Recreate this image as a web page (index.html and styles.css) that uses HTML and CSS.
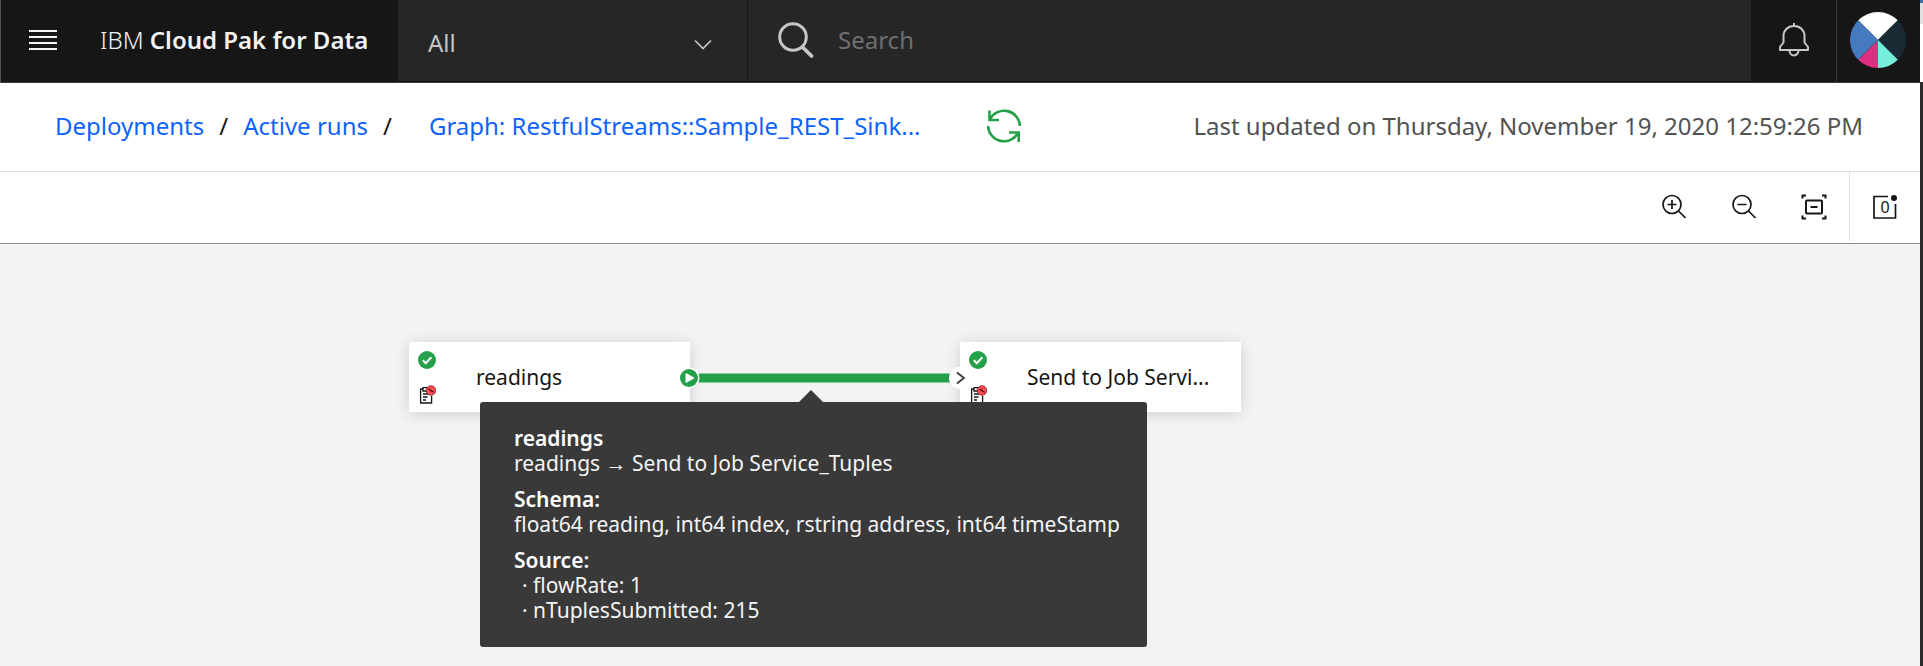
FILE: index.html
```html
<!DOCTYPE html>
<html lang="en">
<head>
<meta charset="utf-8">
<title>IBM Cloud Pak for Data</title>
<link rel="stylesheet" href="styles.css">
</head>
<body>
<div class="app">
  <header class="header">
    <div class="brand">
      <button class="menu" type="button" aria-label="Menu">
        <svg width="30" height="22" viewBox="0 0 30 22" fill="none" stroke="#f4f4f4" stroke-width="2"><path d="M1 2h28M1 8h28M1 14h28M1 20h28"/></svg>
      </button>
      <a class="brand-name" href="#">IBM <b>Cloud Pak for Data</b></a>
    </div>
    <div class="scope">
      <select class="scope-select" aria-label="Search scope"><option>All</option></select>
      <svg class="scope-chevron" width="18" height="12" viewBox="0 0 18 12" fill="none" stroke="#c6c6c6" stroke-width="1.700"><path d="M1 1.500l8 8 8-8"/></svg>
    </div>
    <label class="search">
      <svg width="36" height="37" viewBox="0 0 36 37" fill="none" stroke="#c6c6c6" stroke-width="3"><circle cx="15" cy="15" r="13.300"/><path d="M24.500 25l9 9" stroke-width="3.800" stroke-linecap="round"/></svg>
      <input class="search-input" type="search" placeholder="Search" aria-label="Search">
    </label>
    <button class="header-action bell" type="button" aria-label="Notifications">
      <svg width="32" height="36" viewBox="0 0 32 36" fill="none" stroke="#c6c6c6" stroke-width="2"><path d="M16 1v3M16 4C9.500 4 5.500 8.500 5.500 14v6.500L2 25v3h28v-3l-3.500-4.500V14C26.500 8.500 22.500 4 16 4zM11.500 28.500a4.500 5 0 0 0 9 0" stroke-linejoin="round"/></svg>
    </button>
    <button class="header-action user" type="button" aria-label="User profile">
      <svg width="56" height="56" viewBox="-28 -28 56 56"><path fill="#fff" d="M0 0L-19.800-19.800A28 28 0 0 1 19.800-19.800z"/><path fill="#1a2b35" d="M0 0L19.800-19.800A28 28 0 0 1 19.800 19.800z"/><path fill="#76eedb" d="M0 0L19.800 19.800A28 28 0 0 1 0 28z"/><path fill="#dc2f80" d="M0 0V28A28 28 0 0 1-19.800 19.800z"/><path fill="#4679bd" d="M0 0L-19.800 19.800A28 28 0 0 1-19.800-19.800z"/></svg>
    </button>
  </header>
  <div class="subheader">
    <nav class="crumbs" aria-label="Breadcrumb">
      <a href="#">Deployments</a><span class="slash">/</span><a href="#">Active runs</a><span class="slash">/</span>
      <a class="current" href="#">Graph: RestfulStreams::Sample_REST_Sink...</a>
    </nav>
    <button class="refresh" type="button" aria-label="Refresh">
      <svg width="34" height="34" viewBox="0 0 34 34" fill="none" stroke="#24a148" stroke-width="2.600"><path d="M33 17A16 16 0 0 0 3 10M1 17a16 16 0 0 0 30 7"/><path d="M2.500 1.500v9.500h9.500M22 23.500h9.700V33"/></svg>
    </button>
    <p class="updated">Last updated on Thursday, November 19, 2020 12:59:26 PM</p>
  </div>
  <div class="toolbar">
    <button class="tool" type="button" aria-label="Zoom in">
      <svg width="26" height="26" viewBox="0 0 26 26" fill="none" stroke="#161616" stroke-width="1.700"><circle cx="11" cy="10.500" r="9"/><path d="M17.500 17l7 7M6.500 10.500h9M11 6v9"/></svg>
    </button>
    <button class="tool" type="button" aria-label="Zoom out">
      <svg width="26" height="26" viewBox="0 0 26 26" fill="none" stroke="#161616" stroke-width="1.700"><circle cx="11" cy="10.500" r="9"/><path d="M17.500 17l7 7M6.500 10.500h9"/></svg>
    </button>
    <button class="tool" type="button" aria-label="Zoom to fit">
      <svg width="26" height="26" viewBox="0 0 26 26" fill="none" stroke="#161616" stroke-width="2"><path d="M1.500 4.500v-3h3.500M21 1.500h3.500v3M24.500 21.500v3H21M5 24.500H1.500v-3"/><rect x="5" y="6.500" width="16" height="13" rx="1"/><path d="M9.500 13h7"/></svg>
    </button>
    <button class="tool messages" type="button" aria-label="Messages">
      <svg width="26" height="26" viewBox="0 0 26 26" fill="none" stroke="#161616" stroke-width="1.700"><path d="M16 2.500H2v21.500h21.500V10"/><circle cx="22" cy="4" r="3" fill="#161616" stroke="none"/><text class="count" x="13" y="19" text-anchor="middle">0</text></svg>
    </button>
  </div>
  <main class="canvas">
    <section class="node node-source">
      <div class="status">
        <svg width="18" height="18" viewBox="0 0 18 18"><circle cx="9" cy="9" r="9" fill="#24a148"/><path d="M4.800 9.300l3 3 5.500-6" fill="none" stroke="#fff" stroke-width="2"/></svg>
        <svg width="18" height="19" viewBox="0 0 18 19" fill="none" stroke="#161616" stroke-width="1.300"><path d="M5 4H2.600v14h11V11M5 2.700h5V6H5zM5 9h5M5 12h4.500M5 15h3"/><circle cx="13" cy="5.500" r="4.800" fill="#fa4d56" stroke="#750e13" stroke-width=".7"/><path d="M10.500 4l5 3.300" stroke="#520408"/></svg>
      </div>
      <span class="node-name">readings</span>
    </section>
    <section class="node node-sink">
      <div class="status">
        <svg width="18" height="18" viewBox="0 0 18 18"><circle cx="9" cy="9" r="9" fill="#24a148"/><path d="M4.800 9.300l3 3 5.500-6" fill="none" stroke="#fff" stroke-width="2"/></svg>
        <svg width="18" height="19" viewBox="0 0 18 19" fill="none" stroke="#161616" stroke-width="1.300"><path d="M5 4H2.600v14h11V11M5 2.700h5V6H5zM5 9h5M5 12h4.500M5 15h3"/><circle cx="13" cy="5.500" r="4.800" fill="#fa4d56" stroke="#750e13" stroke-width=".7"/><path d="M10.500 4l5 3.300" stroke="#520408"/></svg>
      </div>
      <span class="node-name">Send to Job Servi...</span>
    </section>
    <svg class="link" width="294" height="24" viewBox="0 0 294 24"><path d="M20 12h256" stroke="#24a148" stroke-width="9"/><circle cx="11" cy="12" r="10.500" fill="#fff"/><circle cx="11" cy="12" r="9" fill="#24a148"/><path d="M8 7.500v9l8-4.500z" fill="#fff" stroke="#fff" stroke-linejoin="round"/><circle cx="282" cy="12" r="11" fill="#fff"/><path d="M279 6.500l7 5.500-7 5.500" fill="none" stroke="#393939" stroke-width="1.800"/></svg>
    <div class="tooltip" role="tooltip">
      <section><h2>readings</h2><p>readings → Send to Job Service_Tuples</p></section>
      <section><h2>Schema:</h2><p>float64 reading, int64 index, rstring address, int64 timeStamp</p></section>
      <section><h2>Source:</h2><ul><li>· flowRate: 1</li><li>· nTuplesSubmitted: 215</li></ul></section>
    </div>
  </main>
</div>
<div class="window-edge"></div>
</body>
</html>
```
FILE: styles.css
```css
* { box-sizing: border-box; }
body {
  display: flex;
  min-height: 100vh;
  margin: 0;
  font-family: "Noto Sans", "Open Sans", sans-serif;
  font-size: 24px;
  line-height: 32px;
  color: #161616;
}
button { padding: 0; border: 0; background: none; font: inherit; color: inherit; }
svg { display: block; flex: none; }
a { color: #0f62fe; text-decoration: none; }
h2, p, ul { margin: 0; padding: 0; font-size: inherit; }

.app { display: flex; flex: 1; flex-direction: column; min-width: 0; }

.header {
  display: flex;
  height: 83px;
  border-bottom: 1px solid #393939;
  border-left: 1px solid #525252;
  background: #161616;
}
.brand { display: flex; align-items: center; flex: none; width: 397px; padding: 0 0 2px 27px; }
.brand-name { margin-left: 42px; color: #f4f4f4; font-weight: 300; white-space: nowrap; }
.brand-name b { font-weight: 600; }
.scope { position: relative; width: 349px; margin-bottom: 1px; background: #262626; }
.scope-select {
  width: 100%;
  height: 100%;
  padding: 4px 30px 0;
  border: 0;
  appearance: none;
  background: none;
  font: inherit;
  color: #c6c6c6;
}
.scope-chevron { position: absolute; top: 39px; right: 35px; pointer-events: none; }
.search {
  display: flex;
  align-items: center;
  gap: 22px;
  flex: 1;
  margin-bottom: 1px;
  padding: 0 0 1px 30px;
  border-left: 1px solid #161616;
  background: #262626;
}
.search-input { flex: 1; border: 0; outline: 0; background: none; font: inherit; color: #f4f4f4; }
.search-input::placeholder { color: #6f6f6f; }
.header-action { display: grid; place-items: center; width: 85px; padding-bottom: 2px; }
.user { width: 84px; padding-right: 2px; border-left: 1px solid #393939; }

.subheader {
  display: flex;
  align-items: center;
  height: 89px;
  padding: 0 57px 2px 55px;
  border-bottom: 1px solid #e0e0e0;
  background: #fff;
}
.crumbs { display: flex; white-space: nowrap; }
.slash { margin: 0 15px; }
.current { min-width: 504px; margin-left: 22px; }
.refresh { margin-left: 54px; }
.updated { margin-left: auto; color: #525252; white-space: nowrap; }

.toolbar {
  display: flex;
  justify-content: flex-end;
  height: 72px;
  border-bottom: 1px solid #8d8d8d;
  background: #fff;
}
.tool { display: grid; place-items: center; width: 70px; margin-bottom: 2px; }
.messages { width: 71px; border-left: 1px solid #e0e0e0; }
.count { fill: #161616; stroke: none; font-size: 16px; }

.canvas { position: relative; flex: 1; background: #f3f3f3; font-size: 21px; line-height: 25px; }
.node {
  position: absolute;
  top: 98px;
  display: flex;
  align-items: center;
  gap: 40px;
  width: 281px;
  padding: 9px 9px 8px;
  background: #fff;
  box-shadow: 0 2px 14px rgba(0, 0, 0, .15);
}
.node-source { left: 409px; }
.node-sink { left: 960px; }
.status { display: grid; gap: 16px; }
.node-name { white-space: nowrap; }
.link { position: absolute; top: 122px; left: 678px; }
.tooltip {
  position: absolute;
  top: 158px;
  left: 480px;
  display: grid;
  gap: 11px;
  padding: 24px 27px 24px 34px;
  border-radius: 3px;
  background: #393939;
  color: #f4f4f4;
  white-space: nowrap;
}
.tooltip::before {
  content: "";
  position: absolute;
  bottom: 100%;
  left: 319px;
  border: 12px solid transparent;
  border-top: 0;
  border-bottom-color: #393939;
}
.tooltip h2 { font-weight: 600; color: #fff; }
.tooltip ul { padding-left: 8px; list-style: none; }

.window-edge {
  width: 3px;
  background: linear-gradient(#3a6ea5 3px, #e0e0e0 3px 24px, #fff 24px 82px, #2b2b2b 82px);
}
```
